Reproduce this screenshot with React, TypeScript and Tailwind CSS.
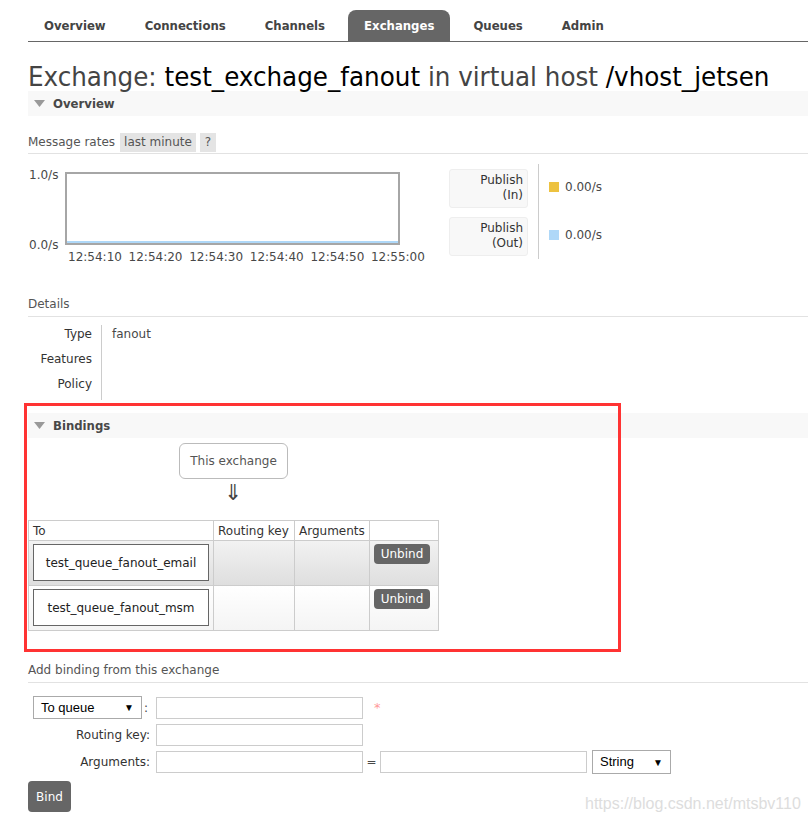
import React from 'react';

const tabs = ['Overview', 'Connections', 'Channels', 'Exchanges', 'Queues', 'Admin'];
const times = ['12:54:10', '12:54:20', '12:54:30', '12:54:40', '12:54:50', '12:55:00'];

function SectionHeader({ title }: { title: string }) {
  return (
    <div className="h-[25px] bg-[#f8f8f8] flex items-center pl-[6px]">
      <svg width="11" height="7" viewBox="0 0 11 7" className="mr-[8px]">
        <polygon points="0,0 11,0 5.5,7" fill="#999" />
      </svg>
      <span className="font-['DejaVu_Sans_Condensed','DejaVu_Sans',sans-serif] font-bold text-[13px] text-[#484848]">{title}</span>
    </div>
  );
}

function SubHeader({ children }: { children: React.ReactNode }) {
  return <div className="border-b border-[#e2e2e2] pb-[3px] text-[#555]">{children}</div>;
}

export default function App() {
  return (
    <div className="relative w-[808px] min-h-[820px] bg-white font-['DejaVu_Sans',sans-serif] text-[12px] text-[#484848] overflow-hidden">
      {/* nav */}
      <nav className="ml-[28px] mt-[10px] flex gap-[7px] border-b border-[#666]">
        {tabs.map(t => (
          <div
            key={t}
            className={`h-[31px] px-[16px] flex items-center rounded-t-[8px] font-['DejaVu_Sans_Condensed','DejaVu_Sans',sans-serif] font-bold text-[13px] ${t === 'Exchanges' ? 'bg-[#666] text-white' : 'text-[#444]'}`}
          >
            {t}
          </div>
        ))}
      </nav>

      <div className="ml-[28px]">
        <h1 className="mt-[21px] h-[28px] leading-[28px] text-[27.4px] font-['DejaVu_Sans_Condensed','DejaVu_Sans',sans-serif] font-light text-[#444] whitespace-nowrap">
          Exchange: <span className="text-black">test_exchage_fanout</span> in virtual host <span className="text-black">/vhost_jetsen</span>
        </h1>

        <SectionHeader title="Overview" />

        {/* message rates */}
        <div className="mt-[18px]">
          <SubHeader>
            <div className="flex items-center gap-[4px] h-[19px] -mb-[3px] pb-[3px]">
              <span className="mr-[1px]">Message rates</span>
              <span className="bg-[#e4e4e4] px-[4px] h-[19px] leading-[19px]">last minute</span>
              <span className="bg-[#e4e4e4] px-[5px] h-[19px] leading-[19px]">?</span>
            </div>
          </SubHeader>
        </div>

        <div className="flex mt-[10px]">
          <div className="relative w-[400px] h-[100px]">
            <span className="absolute left-[1px] top-[2px]">1.0/s</span>
            <span className="absolute left-[1px] top-[72px]">0.0/s</span>
            <div className="absolute left-[37px] top-[8px] w-[335px] h-[73px] border-2 border-[#a6a6a6] bg-white">
              <div className="absolute left-0 right-0 bottom-0 h-[2px] bg-[#afd8f8]" />
            </div>
            <div className="absolute left-[40px] top-[84px] flex whitespace-nowrap">
              {times.map(t => <span key={t} className="w-[60.6px]">{t}</span>)}
            </div>
          </div>
          <div className="ml-[21px] flex">
            <div className="flex flex-col gap-[9px] pt-[5px]">
              <div className="w-[79px] h-[39px] bg-[#f8f8f8] border border-[#eee] rounded-[3px] text-right pr-[4px] pt-[3px] leading-[15px] text-[#333]">Publish<br />(In)</div>
              <div className="w-[79px] h-[39px] bg-[#f8f8f8] border border-[#eee] rounded-[3px] text-right pr-[4px] pt-[3px] leading-[15px] text-[#333]">Publish<br />(Out)</div>
            </div>
            <div className="ml-[10px] w-px h-[95px] bg-[#ccc]" />
            <div className="ml-[10px] flex flex-col pt-[15px] gap-[33px]">
              <div className="flex items-center gap-[6px] h-[15px]"><span className="w-[10px] h-[10px] bg-[#edc240]" />0.00/s</div>
              <div className="flex items-center gap-[6px] h-[15px]"><span className="w-[10px] h-[10px] bg-[#afd8f8]" />0.00/s</div>
            </div>
          </div>
        </div>

        {/* details */}
        <div className="mt-[31px]">
          <SubHeader>Details</SubHeader>
        </div>
        <div className="flex mt-[8px]">
          <div className="w-[64px] text-right flex flex-col gap-[10px] leading-[15px] pt-[2px] text-[#333]">
            <span>Type</span>
            <span>Features</span>
            <span>Policy</span>
          </div>
          <div className="ml-[9px] w-px h-[75px] bg-[#ccc]" />
          <div className="ml-[10px] pt-[2px] leading-[15px]">fanout</div>
        </div>

        {/* bindings */}
        <div className="mt-[13px]">
          <SectionHeader title="Bindings" />
        </div>
        <div className="ml-[151px] mt-[5px] w-[109px] h-[36px] border border-[#bbb] rounded-[6px] flex items-center justify-center text-[#555]">This exchange</div>
        <div className="ml-[196px] mt-[3px] h-[20px] text-[22px] leading-[22px] text-[#444]">⇓</div>
        <table className="mt-[18px] border-collapse text-[#333]">
          <thead>
            <tr className="h-[20px]">
              <th className="w-[185px] border border-[#ccc] text-left font-normal px-[4px]">To</th>
              <th className="w-[81px] border border-[#ccc] text-left font-normal px-[4px]">Routing key</th>
              <th className="w-[75px] border border-[#ccc] text-left font-normal px-[4px]">Arguments</th>
              <th className="w-[69px] border border-[#ccc]"></th>
            </tr>
          </thead>
          <tbody>
            {['test_queue_fanout_email', 'test_queue_fanout_msm'].map((q, i) => (
              <tr key={q} className={`h-[45px] ${i === 0 ? 'bg-gradient-to-b from-[#f2f2f2] to-[#dedede]' : 'bg-gradient-to-b from-white to-[#f4f4f4]'}`}>
                <td className="border border-[#ccc] px-[4px] py-[3px] align-top">
                  <div className="h-[37px] border border-[#666] bg-white flex items-center justify-center text-[#222]">{q}</div>
                </td>
                <td className="border border-[#ccc]"></td>
                <td className="border border-[#ccc]"></td>
                <td className="border border-[#ccc] align-top pt-[3px] pl-[4px]">
                  <div className="w-[56px] h-[20px] bg-[#666] rounded-[4px] text-white flex items-center justify-center">Unbind</div>
                </td>
              </tr>
            ))}
          </tbody>
        </table>

        {/* add binding */}
        <div className="mt-[30px]">
          <SubHeader>Add binding from this exchange</SubHeader>
        </div>
        <div className="mt-[13px] ml-[5px] flex flex-col gap-[5px]">
          <div className="flex items-center h-[23px]">
            <div className="w-[109px] h-[23px] border border-[#aaa] flex items-center justify-between px-[7px] text-[13px] text-black font-['Liberation_Sans',sans-serif]">
              To queue<span className="text-[10px]">▼</span>
            </div>
            <span className="ml-[2px] w-[12px]">:</span>
            <div className="w-[207px] h-[22px] border border-[#ccc]" />
            <span className="ml-[11px] text-[#f99] text-[13px]">*</span>
          </div>
          <div className="flex items-center h-[22px]">
            <span className="w-[123px] text-right pr-[6px] text-[#333]">Routing key:</span>
            <div className="w-[207px] h-[22px] border border-[#ccc]" />
          </div>
          <div className="flex items-center h-[22px]">
            <span className="w-[123px] text-right pr-[6px] text-[#333]">Arguments:</span>
            <div className="w-[207px] h-[22px] border border-[#ccc]" />
            <span className="w-[17px] text-center">=</span>
            <div className="w-[207px] h-[22px] border border-[#ccc]" />
            <div className="ml-[5px] w-[79px] h-[24px] border border-[#aaa] flex items-center justify-between px-[7px] text-[13px] text-black font-['Liberation_Sans',sans-serif]">
              String<span className="text-[10px]">▼</span>
            </div>
          </div>
        </div>
        <div className="mt-[8px] w-[43px] h-[31px] bg-[#666] rounded-[4px] text-white flex items-center justify-center">Bind</div>
      </div>

      {/* red annotation box */}
      <div className="absolute left-[24px] top-[403px] w-[597px] h-[249px] border-[3px] border-[#f33] pointer-events-none" />

      {/* watermark */}
      <div className="absolute left-[585px] top-[792px] text-[16px] text-[#ddd] font-['Liberation_Sans',sans-serif]">https://blog.csdn.net/mtsbv110</div>
    </div>
  );
}
